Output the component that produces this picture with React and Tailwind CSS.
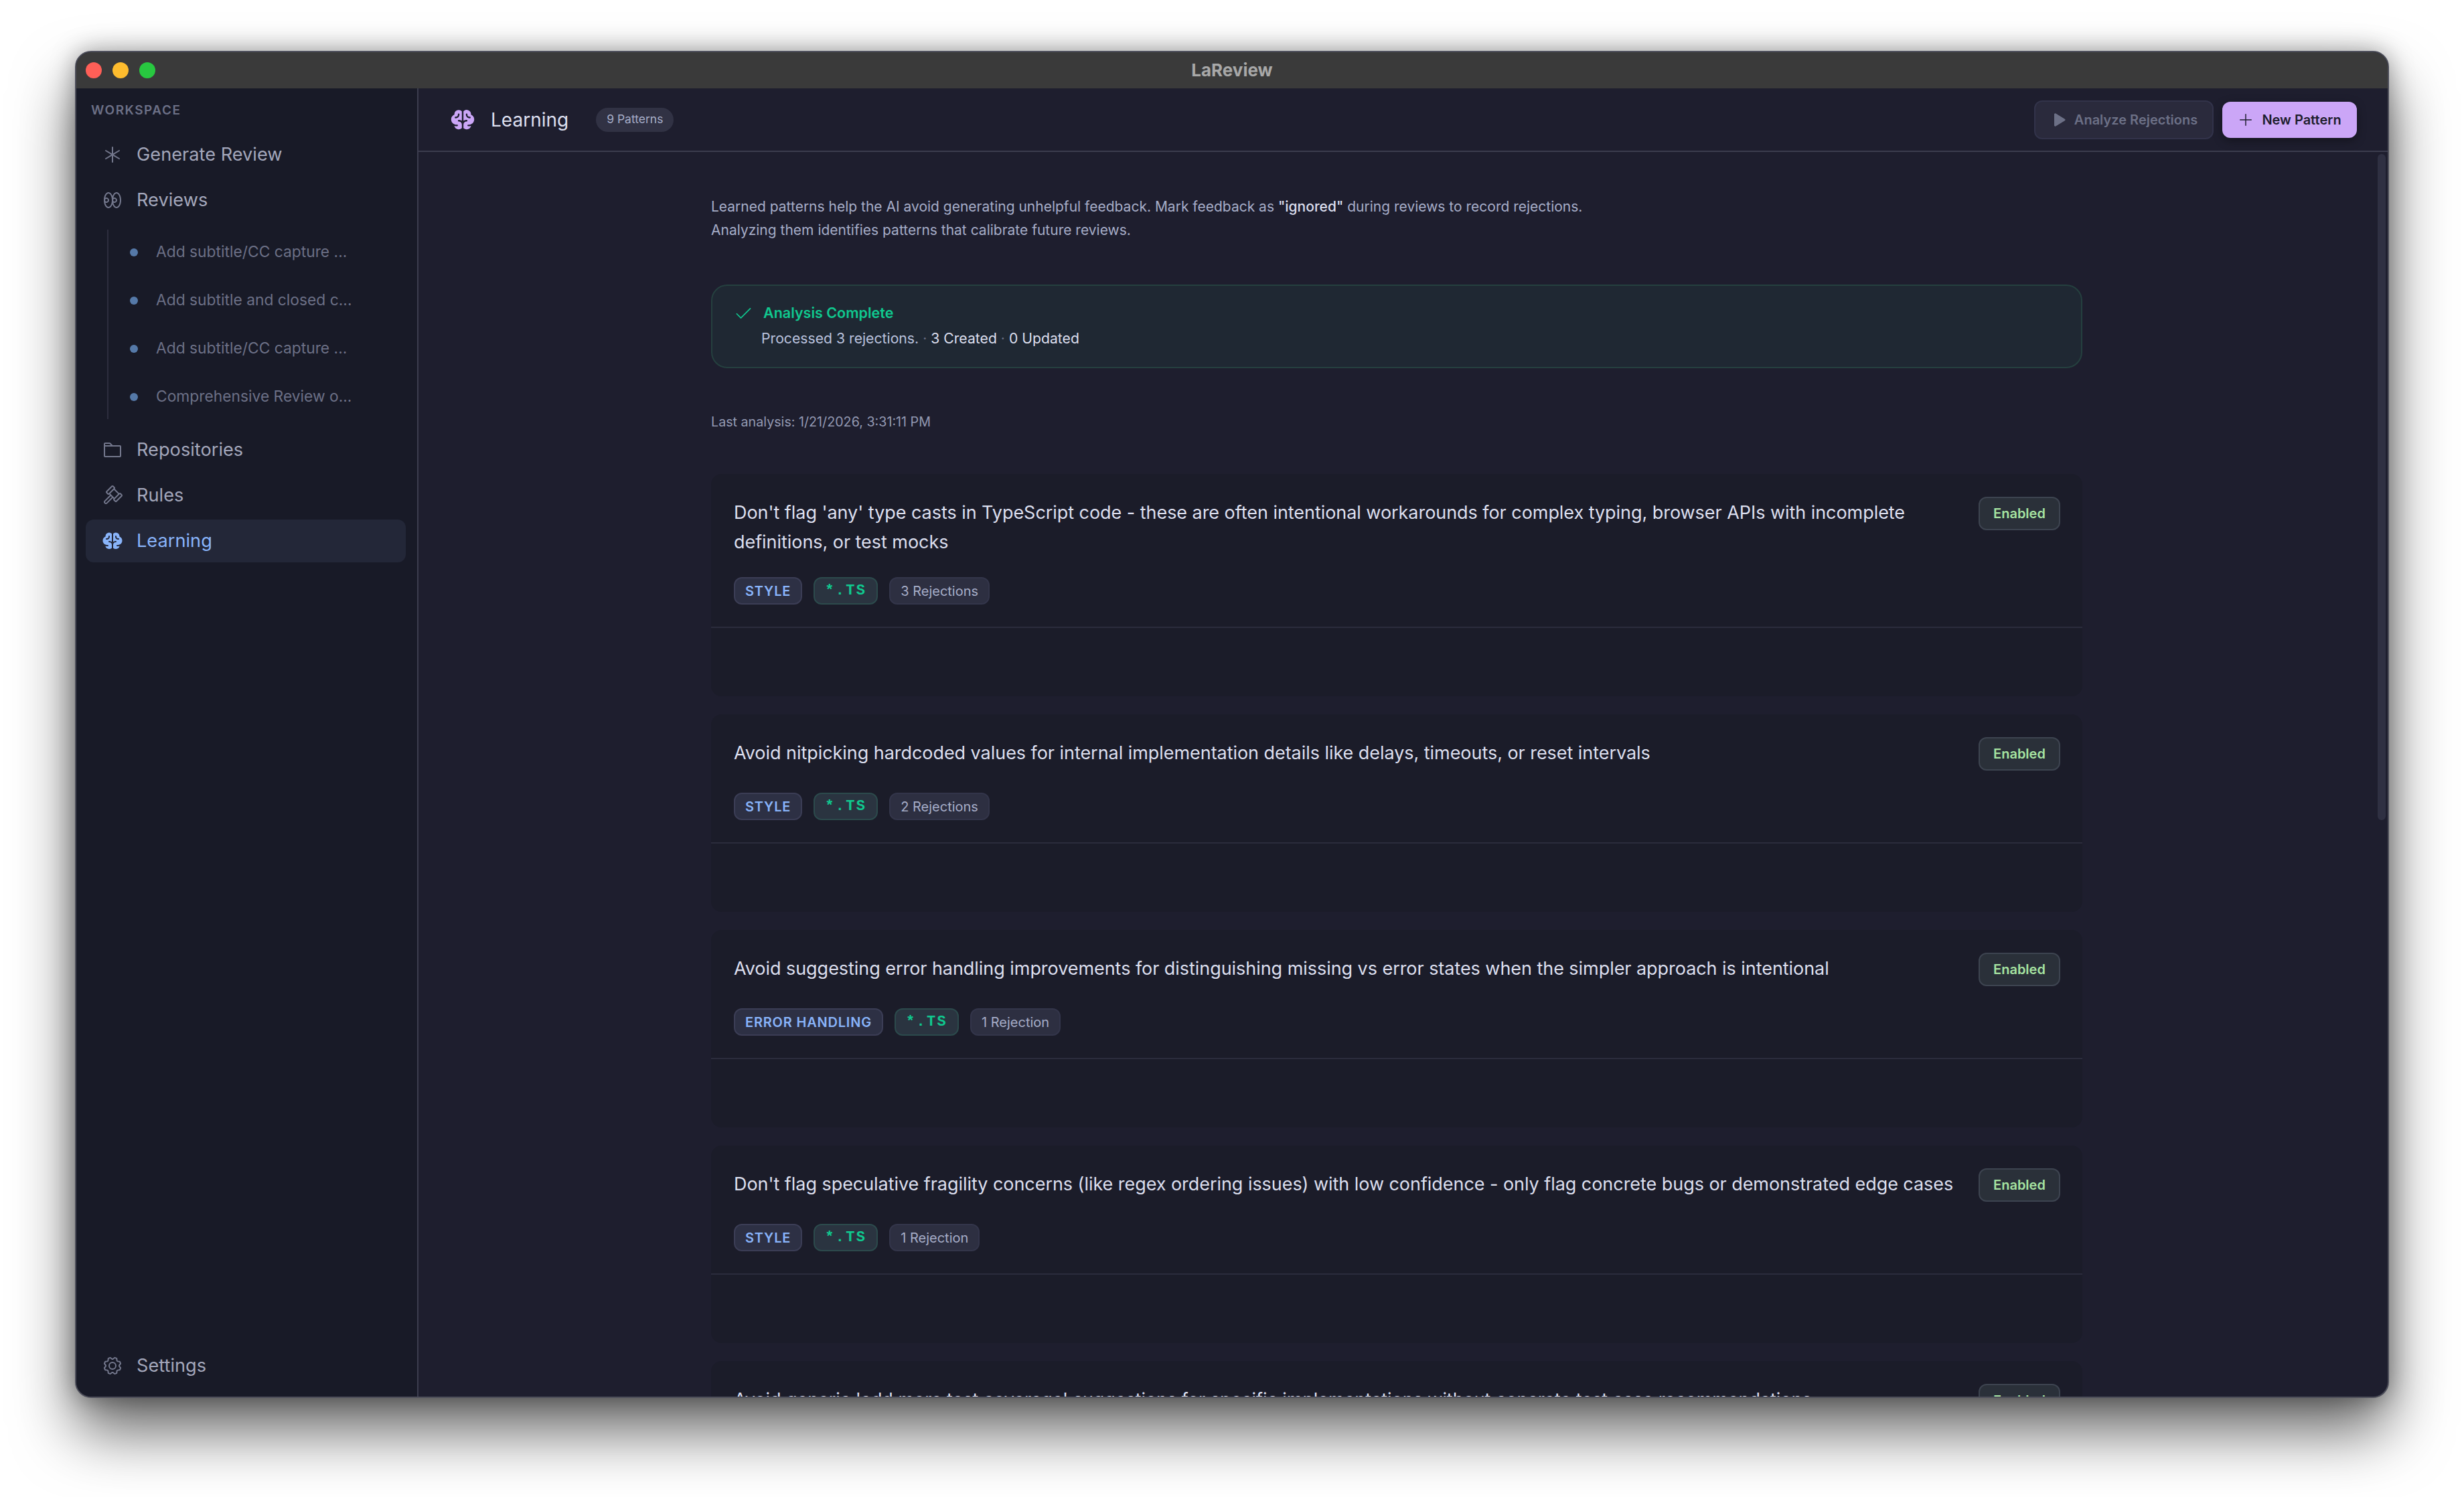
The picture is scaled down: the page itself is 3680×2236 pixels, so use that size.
import React from 'react';
import { PiAsterisk, PiEyes, PiFolder, PiGavel, PiBrainFill, PiGear, PiCheck, PiPlus, PiPlayFill } from 'react-icons/pi';

const patterns = [
    { text: "Don't flag 'any' type casts in TypeScript code - these are often intentional workarounds for complex typing, browser APIs with incomplete definitions, or test mocks", tag: 'STYLE', count: '3 Rejections' },
    { text: 'Avoid nitpicking hardcoded values for internal implementation details like delays, timeouts, or reset intervals', tag: 'STYLE', count: '2 Rejections' },
    { text: 'Avoid suggesting error handling improvements for distinguishing missing vs error states when the simpler approach is intentional', tag: 'ERROR HANDLING', count: '1 Rejection' },
    { text: "Don't flag speculative fragility concerns (like regex ordering issues) with low confidence - only flag concrete bugs or demonstrated edge cases", tag: 'STYLE', count: '1 Rejection' },
    { text: "Avoid generic 'add more test coverage' suggestions for specific implementations without concrete test case recommendations", tag: 'TESTING', count: '1 Rejection' },
];

const reviews = ['Add subtitle/CC capture ...', 'Add subtitle and closed c...', 'Add subtitle/CC capture ...', 'Comprehensive Review o...'];

const NavItem = ({ icon: Icon, label, active }) => (
    <div className={`flex h-[64px] items-center rounded-xl pl-[24px] text-[27.2px] ${active ? 'bg-[#232738] text-[#89b4fa]' : 'text-[#a3a7bb]'}`}>
        <Icon className={`mr-[20px] h-[32px] w-[32px] shrink-0 ${active ? 'text-[#89b4fa]' : 'text-[#73778c]'}`} />
        <span>{label}</span>
    </div>
);

const Tag = ({ className, children }) => (
    <span className={`flex h-[41px] items-center rounded-xl border-2 px-[15px] text-[20px] ${className}`}>{children}</span>
);

const PatternCard = ({ pattern }) => (
    <div className="rounded-2xl bg-[#1b1c29]">
        <div className="border-b-2 border-[#2b2c3c] pb-[33px] pl-[34px] pr-[33px] pt-[34px]">
            <div className="flex items-start justify-between gap-[24px]">
                <p className="mt-[2px] min-h-[51px] flex-1 text-[27px] leading-[44px] tracking-[-0.05px] text-[#dcdfee]">{pattern.text}</p>
                <span className="flex h-[50px] w-[122px] shrink-0 items-center justify-center rounded-xl border-2 border-[#3d4450] bg-[#2a3039] text-[20px] font-semibold text-[#a6e3a1]">Enabled</span>
            </div>
            <div className="mt-[30px] flex gap-[17px]">
                <Tag className="border-[#3b3d55] bg-[#2d3044] font-semibold tracking-[0.8px] text-[#89b4fa]">{pattern.tag}</Tag>
                <Tag className="border-[#2c4a4c] bg-[#2a3440] font-bold text-[#10c98f]"><span className="font-['Liberation_Mono'] text-[22px] tracking-[2.3px]">*.TS</span></Tag>
                <Tag className="border-[#33354a] bg-[#2d2f41] text-[#a6adc8]">{pattern.count}</Tag>
            </div>
        </div>
        <div className="h-[102px]" />
    </div>
);

export default function App() {
    return (
        <div className="h-[2236px] w-[3680px] overflow-hidden bg-white pl-[112px] pt-[76px] font-['Inter',sans-serif]">
            <div className="flex h-[2012px] w-[3456px] flex-col overflow-hidden rounded-[24px] border-2 border-[#4c4d59] bg-[#1e1e2e] shadow-[0_50px_90px_rgba(0,0,0,0.6),0_0_36px_rgba(0,0,0,0.35)]">
                <div className="relative flex h-[54px] shrink-0 items-center justify-center bg-[#3a3a3a]">
                    <div className="absolute left-[14px] flex gap-[16px]">
                        <span className="h-[24px] w-[24px] rounded-full bg-[#ff5f57]" />
                        <span className="h-[24px] w-[24px] rounded-full bg-[#febc2e]" />
                        <span className="h-[24px] w-[24px] rounded-full bg-[#28c840]" />
                    </div>
                    <span className="pb-[2px] text-[26px] font-bold text-[#a8a8a8]">LaReview</span>
                </div>

                <div className="flex min-h-0 flex-1">
                    <aside className="flex w-[511px] shrink-0 flex-col border-r-2 border-[#3c3d4e] bg-[#181a27] pb-[14px]">
                        <div className="pl-[22px] pt-[21px] text-[19px] font-semibold leading-[24px] tracking-[1.5px] text-[#6c7086]">WORKSPACE</div>
                        <nav className="mt-[22px] flex flex-1 flex-col gap-[4px] pl-[14px] pr-[17px]">
                            <NavItem icon={PiAsterisk} label="Generate Review" />
                            <NavItem icon={PiEyes} label="Reviews" />
                            <div className="mb-[10px] ml-[32px] mt-[8px] flex h-[283px] flex-col justify-center border-l-2 border-[#2d2e3e]">
                                {reviews.map((review, i) => (
                                    <div key={i} className="flex h-[72px] shrink-0 items-center pl-[32px] text-[22.8px] text-[#6c7086]">
                                        <span className="mr-[27px] h-[12px] w-[12px] rounded-full bg-[#5579a8]" />
                                        {review}
                                    </div>
                                ))}
                            </div>
                            <NavItem icon={PiFolder} label="Repositories" />
                            <NavItem icon={PiGavel} label="Rules" />
                            <NavItem icon={PiBrainFill} label="Learning" active />
                            <div className="mt-auto">
                                <NavItem icon={PiGear} label="Settings" />
                            </div>
                        </nav>
                    </aside>

                    <main className="flex min-w-0 flex-1 flex-col">
                        <header className="flex h-[95px] shrink-0 items-center justify-between border-b-2 border-[#3c3d4e] pl-[47px] pr-[46px]">
                            <div className="flex items-center">
                                <PiBrainFill className="h-[38px] w-[38px] text-[#cba6f7]" />
                                <span className="ml-[23px] text-[28px] text-[#dcdfee]">Learning</span>
                                <span className="ml-[41px] flex h-[36px] items-center rounded-full bg-[#313244] px-[16px] text-[17.5px] text-[#a6adc8]">9 Patterns</span>
                            </div>
                            <div className="flex items-center gap-[13px]">
                                <button className="flex h-[58px] w-[268px] items-center justify-center gap-[12px] rounded-xl border-2 border-[#32334a] bg-[#2a2a3c] text-[20px] font-semibold text-[#6c7086]">
                                    <PiPlayFill className="h-[24px] w-[24px]" />
                                    Analyze Rejections
                                </button>
                                <button className="flex h-[54px] w-[201px] items-center justify-center gap-[12px] rounded-xl bg-[#cba6f7] text-[20px] font-semibold text-[#1e1e2e] shadow-[0_4px_14px_rgba(0,0,0,0.35)]">
                                    <PiPlus className="h-[24px] w-[24px]" />
                                    New Pattern
                                </button>
                            </div>
                        </header>

                        <div className="flex min-h-0 flex-1">
                            <div className="min-w-0 flex-1 overflow-hidden pr-[3px]">
                                <div className="mx-auto w-[2048px] pt-[64px]">
                                    <p className="text-[21px] leading-[35px] text-[#a6adc8]">
                                        Learned patterns help the AI avoid generating unhelpful feedback. Mark feedback as <span className="font-medium text-[#dcdfee]">"ignored"</span> during reviews to record rejections.
                                        <br />
                                        Analyzing them identifies patterns that calibrate future reviews.
                                    </p>
                                    <div className="mt-[64px] h-[125px] rounded-3xl border-2 border-[#25403f] bg-[#1f2833] pl-[32px] pt-[24px]">
                                        <div className="flex items-center gap-[16px] text-[21.5px] font-semibold text-[#10c98f]">
                                            <PiCheck className="h-[28px] w-[28px]" />
                                            Analysis Complete
                                        </div>
                                        <p className="ml-[41px] mt-[7px] text-[21.2px] text-[#bac2de]">
                                            Processed 3 rejections. <span className="text-[#6c7086]">·</span> <span className="text-[#dcdfee]">3 Created</span> <span className="text-[#6c7086]">·</span> <span className="text-[#dcdfee]">0 Updated</span>
                                        </p>
                                    </div>
                                    <p className="mt-[66px] text-[19.7px] leading-[28px] text-[#9399b2]">Last analysis: 1/21/2026, 3:31:11 PM</p>
                                    <div className="mt-[64px] flex flex-col gap-[27px]">
                                        {patterns.map((pattern, i) => (
                                            <PatternCard key={i} pattern={pattern} />
                                        ))}
                                    </div>
                                </div>
                            </div>
                            <div className="w-[16px] shrink-0 pt-[3px]">
                                <div className="ml-[1px] h-[995px] w-[12px] rounded-full bg-[#2f3042]" />
                            </div>
                        </div>
                    </main>
                </div>
            </div>
        </div>
    );
}
